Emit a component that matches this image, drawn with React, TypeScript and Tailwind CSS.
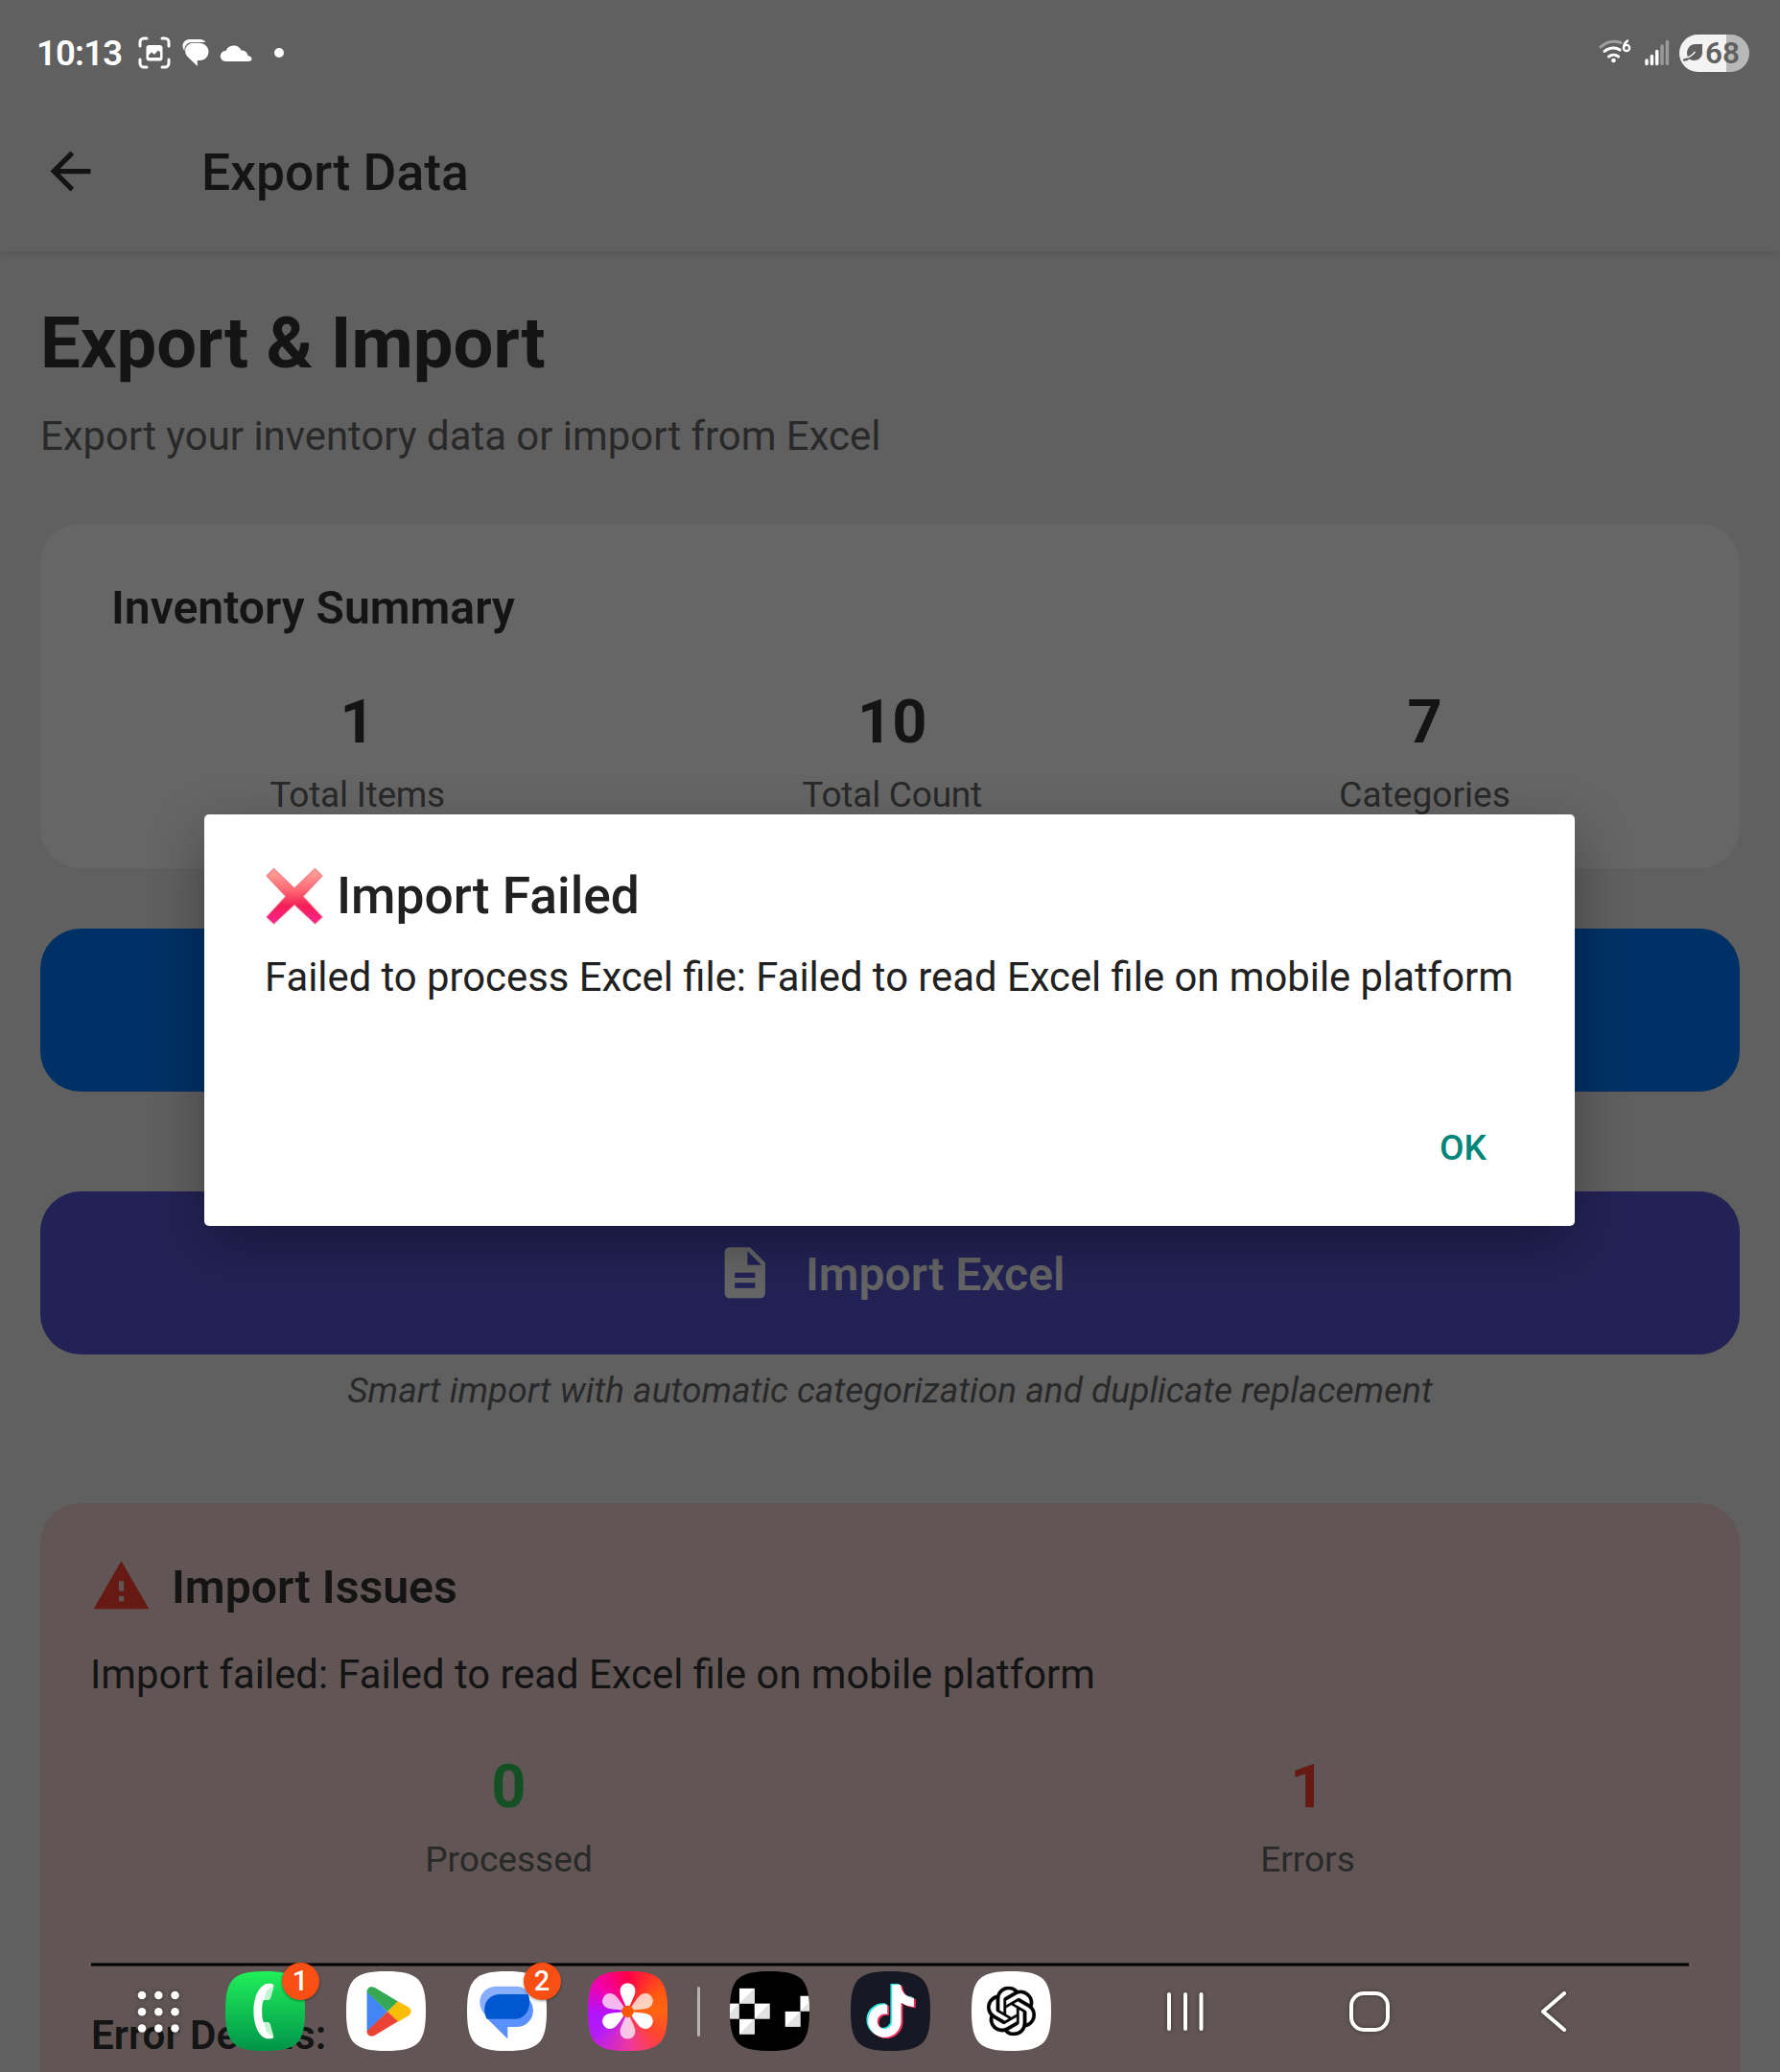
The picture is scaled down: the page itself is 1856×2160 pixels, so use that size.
import type { ReactNode } from "react";
import { MdArrowBack, MdDescription, MdWarning } from "react-icons/md";
import { SiOpenai, SiTiktok } from "react-icons/si";

function StatusBar() {
  return (
    <div className="absolute top-0 left-0 flex h-[110px] w-full items-center justify-between pr-8 pl-[38px] text-white">
      <div className="flex items-center">
        <span className="w-[105.5px] pt-[2px] text-[36.5px] leading-[40px] font-semibold tracking-[-0.8px]">10:13</span>
        <svg width="34" height="34" viewBox="0 0 34 34" fill="none">
          <path
            d="M9 2H6a4 4 0 0 0-4 4v4M25 2h3a4 4 0 0 1 4 4v4M9 32H6a4 4 0 0 1-4-4v-4M25 32h3a4 4 0 0 0 4-4v-4"
            stroke="#fff"
            strokeWidth="3"
            strokeLinecap="round"
          />
          <rect x="8.500" y="9" width="17" height="16.500" rx="3" fill="#fff" />
          <path d="M11 22v-2.500l3-3 3 2.200 4-4.200 2 2V22z" fill="#606060" />
        </svg>
        <svg className="ml-[11px]" width="30" height="30" viewBox="0 0 30 30" fill="#fff">
          <path d="M3.500 13C-1 7.500 2.500 1 9 1h10c3 0 5 1 6.500 3H12C6.500 4 3 8 3.500 13z" />
          <path d="M13 4.700h5.500c5.500 0 10 4 10 9S24.500 23 19.500 23h-2.700v6L6 18.500C1.500 12 5.500 4.700 13 4.700z" />
        </svg>
        <svg className="ml-[10px]" width="34" height="20" viewBox="0 0 34 20" fill="#fff">
          <path d="M6 19a5.500 5.500 0 0 1 .5-11A8.700 8.700 0 0 1 22.500 7.500c4 0 6.500 2.500 7 5.500 2.500.5 4 1.800 4 3.500 0 1.500-1.500 2.500-3.500 2.500z" />
        </svg>
        <div className="ml-[23px] size-[10px] rounded-full bg-white" />
      </div>
      <div className="flex items-center">
        <svg width="36" height="30" viewBox="0 0 36 30" fill="none" strokeLinecap="round">
          <path d="M2 9C8 3.500 16 2 23 4.500" stroke="#a0a0a0" strokeWidth="3" />
          <path d="M6 13.500C11 9 18 9 22 12M10.500 19c3-2.500 7-2.500 10 0" stroke="#fff" strokeWidth="3" />
          <circle cx="15.500" cy="23" r="2.300" fill="#fff" />
          <path d="M30 2.500c-2.500 2-4 4-4 7" stroke="#fff" strokeWidth="2.400" />
          <circle cx="29" cy="10" r="3.100" stroke="#fff" strokeWidth="2.400" />
        </svg>
        <svg className="ml-[12px]" width="26" height="30" viewBox="0 0 26 30" strokeWidth="3.500" strokeLinecap="round">
          <path d="M2 26.500v-3.500M7.400 26.500v-8M12.700 26.500V13.500" stroke="#fff" />
          <path d="M18 26.500V8M23.400 26.500V3.500" stroke="#999" />
        </svg>
        <div className="ml-[10px] flex h-[39px] w-[73px] items-center overflow-hidden rounded-full bg-[linear-gradient(90deg,#f3f3f3_49px,#b8b8b8_49px)] pl-[4px] text-[#606060]">
          <svg width="21" height="20" viewBox="0 0 21 20">
            <path d="M20 1v8c0 6-4 9-9 9-5 0-7-4-7-8s3-9 9-9z" fill="#606060" />
            <path d="M1 17.500C6 17 10 13 13 9.500" stroke="#606060" strokeWidth="2.500" strokeLinecap="round" />
            <path d="M4 15c4-1 6-3 8.500-6" stroke="#f3f3f3" strokeWidth="1.500" />
          </svg>
          <span className="ml-[2px] text-[31.5px] leading-[39px] font-semibold">68</span>
        </div>
      </div>
    </div>
  );
}

function Stat({ value, label, color = "text-[#141414]" }: { value: string; label: ReactNode; color?: string }) {
  return (
    <div className="flex flex-col items-center">
      <div className={"text-[63.2px] leading-[76px] font-bold " + color}>{value}</div>
      <div className="mt-[17px] text-[37.1px] leading-[44px] text-[#292929]">{label}</div>
    </div>
  );
}

const squircle = "M50 0C90 0 100 10 100 50S90 100 50 100 0 90 0 50 10 0 50 0Z";

function AppIcon({ id, fill, badge, children }: { id: string; fill: string; badge?: string; children: ReactNode }) {
  return (
    <div className="relative size-[83px] shrink-0">
      <svg width="83" height="83" viewBox="0 0 100 100">
        <clipPath id={id}>
          <path d={squircle} />
        </clipPath>
        <path d={squircle} fill={fill} />
        <g clipPath={"url(#" + id + ")"}>{children}</g>
      </svg>
      {badge && (
        <span className="absolute -top-[9px] -right-[15px] flex size-[39px] items-center justify-center rounded-full bg-[#f94e14] text-[29px] leading-[39px] font-medium text-white shadow-[0_1px_3px_rgba(0,0,0,0.4)]">
          {badge}
        </span>
      )}
    </div>
  );
}

const petal = "M50 50C47 40 40 30 40.500 24C41 18 45 15 50 15S59 18 59.500 24C60 30 53 40 50 50Z";

function Dock() {
  return (
    <div className="absolute bottom-0 left-0 flex h-[126px] w-full items-center pl-[143px]">
      <svg width="44" height="44" viewBox="0 0 44 44" fill="#fff" className="drop-shadow-[0_0_2px_rgba(0,0,0,0.5)]">
        {[5, 22.3, 39.5].map((y) => [5, 22.3, 39.5].map((x) => <circle key={x + "-" + y} cx={x} cy={y} r="4.300" />))}
      </svg>
      <div className="-mt-px ml-[47.5px] flex gap-[43px]">
        <AppIcon id="phone" fill="url(#green)" badge="1">
          <defs>
            <linearGradient id="green" x1="0" y1="0" x2="0" y2="1">
              <stop offset="0" stopColor="#20f05a" />
              <stop offset="1" stopColor="#00944a" />
            </linearGradient>
          </defs>
          <path d="M50 16h8c2 0 3 1 3 3l-4 14c-.6 2-1.500 3-3.500 3H46z M46 64h7c2 0 3 1 3.500 3l4 14c.4 2-.5 3-2 3.500L50 82z" fill="#c4f3d3" />
          <path d="M57 15.500C44 14 35.500 30 35.500 50S44 87 57 84.500c1.500-.3 2.500-1 3-2L51.500 76 48.500 64C46.500 62 46 57 46 50s.5-12 2.500-14L52 24l8.500-6c-.5-1.500-1.500-2.300-3.500-2.500z" fill="#fff" />
        </AppIcon>
        <AppIcon id="play" fill="#fff">
          <path d="M26 25v51l26-25.500z" fill="#4285f4" />
          <path d="M26 26c0-6 5-8 10-5.500L65 38 52 50.500z" fill="#34a853" />
          <path d="M65 37.500l13 7.500c4.500 3 4.500 8 0 11l-13 7.500L52 50.500z" fill="#fbbc04" />
          <path d="M26 75c0 6 5 8 10 5.500L65 63 52 50.500z" fill="#ea4335" />
        </AppIcon>
        <AppIcon id="messages" fill="#fff" badge="2">
          <path d="M36 19h26c10 0 16 7 16 15H50L23 55c-4-4-7-10-7-16 0-11 9-20 20-20z" fill="#8aaeff" />
          <path d="M42 29h21c12 0 20 9 20 20.500S74 70 62 70H51v15L27 61c-3-4-5-8-5-14 0-10 8-18 20-18z" fill="#5b90ff" />
          <path d="M42 29h34c2 3 2.500 6 2.500 9C78.500 51 71 60 60 60H25c-2-3-3-7-3-12 0-11 8-19 20-19z" fill="#0057d0" />
        </AppIcon>
        <AppIcon id="gallery" fill="#ff2a5a">
          <foreignObject width="100" height="100">
            <div className="size-[100px] bg-[conic-gradient(from_0deg,#ff0048,#ff5a10_60deg,#ff6510_90deg,#ff4530_130deg,#f0389a_175deg,#b31cf8_235deg,#b013ff_265deg,#f000b0_310deg,#ff0048)]" />
          </foreignObject>
          {[60, 180, 300].map((a) => (
            <path key={a} d={petal} fill="#fff" fillOpacity="0.720" transform={"rotate(" + a + " 50 50)"} />
          ))}
          {[0, 120, 240].map((a) => (
            <path key={a} d={petal} fill="#fff" transform={"rotate(" + a + " 50 50)"} />
          ))}
          <circle cx="50" cy="50.500" r="7.500" fill="#ff5500" />
        </AppIcon>
      </div>
      <div className="ml-[31px] h-[52px] w-[3px] rounded-full bg-[#b7b1b1]" />
      <div className="-mt-px ml-[31.5px] flex gap-[43px]">
        <AppIcon id="pixels" fill="#000">
          {[
            [12, 21.5],
            [-7.5, 40.5],
            [31, 40.5],
            [12, 60],
            [69.5, 50.5],
            [88.5, 31],
          ].map(([x, y]) => (
            <g key={x + "-" + y} transform={"translate(" + x + " " + y + ")"}>
              <rect width="19" height="19" fill="#fff" />
              <path d="M19 0v19H0z" fill="#e2e2e2" />
            </g>
          ))}
        </AppIcon>
        <AppIcon id="tiktok" fill="#161823">
          <SiTiktok x="15.500" y="15.500" size="66" color="#30e8e0" />
          <SiTiktok x="20" y="18.500" size="66" color="#f0305c" />
          <SiTiktok x="17.700" y="17" size="66" color="#fff" />
        </AppIcon>
        <AppIcon id="openai" fill="#fff">
          <SiOpenai x="19" y="19" size="62" color="#000" stroke="#000" strokeWidth="0.200" />
        </AppIcon>
      </div>
      <svg className="ml-[118px] drop-shadow-[0_0_2px_rgba(0,0,0,0.4)]" width="44" height="44" viewBox="0 0 44 44" stroke="#fff" strokeWidth="4" strokeLinecap="round">
        <path d="M5 4v36M22 4v36M38.500 4v36" />
      </svg>
      <svg className="ml-[148px] drop-shadow-[0_0_2px_rgba(0,0,0,0.4)]" width="44" height="44" viewBox="0 0 44 44" fill="none" stroke="#fff" strokeWidth="4">
        <rect x="3" y="3" width="38" height="38" rx="13" />
      </svg>
      <svg className="ml-[155px] drop-shadow-[0_0_2px_rgba(0,0,0,0.4)]" width="30" height="44" viewBox="0 0 30 44" fill="none" stroke="#fff" strokeWidth="4" strokeLinecap="round" strokeLinejoin="round">
        <path d="M26 3L4 22l22 19" />
      </svg>
    </div>
  );
}

function AlertDialog() {
  return (
    <div className="absolute top-[849px] left-[213px] flex h-[429px] w-[1429px] flex-col rounded-[5px] bg-white pt-[53px] pl-[63px] text-[#212121] shadow-[0_20px_60px_rgba(0,0,0,0.32)]">
      <div className="flex h-[64px] items-center">
        <svg className="ml-px" width="60" height="60" viewBox="0 0 60 60">
          <defs>
            <linearGradient id="cross" x1="0" y1="0" x2="0" y2="1">
              <stop offset="0" stopColor="#ffa99c" />
              <stop offset="0.400" stopColor="#ff6671" />
              <stop offset="0.680" stopColor="#f41d55" />
              <stop offset="1" stopColor="#fb2296" />
            </linearGradient>
          </defs>
          <path
            d="M8.500 1.500L30 22 51.500 1.500 59 9 39 30.500 59 52 51.500 59 30 39 8.500 59 1 52 21 30.500 1 9z"
            fill="url(#cross)"
            stroke="#e8566c"
            strokeOpacity="0.500"
            strokeWidth="1.500"
            strokeLinejoin="round"
          />
        </svg>
        <h2 className="ml-[14px] text-[53.3px] leading-[64px] font-medium">Import Failed</h2>
      </div>
      <p className="mt-[25px] text-[41.8px] leading-[56px]">
        Failed to process Excel file: Failed to read Excel file on mobile platform
      </p>
      <button className="mt-[128px] mr-[92px] self-end text-[37.1px] leading-[44px] font-medium text-[#008577]">OK</button>
    </div>
  );
}

export default function App() {
  return (
    <div className="relative h-[2160px] w-[1856px] overflow-hidden bg-[#606060] font-[Roboto,sans-serif] text-[#141414]">
      <header className="flex h-[262px] items-center pt-[98px] pl-[42px] shadow-[0_2px_8px_rgba(0,0,0,0.12)]">
        <MdArrowBack className="-mt-[3px] size-[63px]" />
        <h1 className="ml-[105px] text-[53.4px] leading-[64px] font-medium">Export Data</h1>
      </header>
      <main className="px-[42px] pt-[52px]">
        <h2 className="text-[74.2px] leading-[88px] font-bold">Export &amp; Import</h2>
        <p className="mt-[25px] text-[41.9px] leading-[56px] text-[#292929]">
          Export your inventory data or import from Excel
        </p>
        <section className="mt-[63px] h-[359px] rounded-[42px] bg-[#666666] px-[53px] pt-[60px]">
          <h3 className="ml-[21px] text-[48.1px] leading-[56px] font-semibold">Inventory Summary</h3>
          <div className="mt-[52px] flex justify-around">
            <Stat value="1" label={<span className="tracking-[-0.25px]">Total Items</span>} />
            <Stat value="10" label={<span className="tracking-[-0.25px]">Total Count</span>} />
            <Stat value="7" label="Categories" />
          </div>
        </section>
        <div className="mt-[63px] h-[170px] rounded-[42px] bg-[#003166]" />
        <button className="mt-[104px] flex h-[170px] w-full items-center justify-center rounded-[42px] bg-[#232256] pr-px text-[#666666]">
          <MdDescription className="size-[63.5px]" />
          <span className="ml-[32px] pt-[3px] text-[48px] leading-[56px] font-semibold">Import Excel</span>
        </button>
        <p className="mt-[16px] text-center text-[37.1px] leading-[44px] text-[#292929] italic">
          Smart import with automatic categorization and duplicate replacement
        </p>
        <section className="mt-[95px] h-[640px] rounded-[42px] bg-[#615655] px-[53px] pt-[54px]">
          <div className="flex h-[64px] items-center">
            <MdWarning className="size-[63px] text-[#661a13]" />
            <h3 className="ml-[21px] pt-[3px] text-[48.2px] leading-[56px] font-semibold">Import Issues</h3>
          </div>
          <p className="mt-[33px] -ml-px text-[41.8px] leading-[56px]">
            Import failed: Failed to read Excel file on mobile platform
          </p>
          <div className="mt-[50px] flex justify-around">
            <Stat value="0" label="Processed" color="text-[#155024]" />
            <Stat value="1" label="Errors" color="text-[#661a13]" />
          </div>
          <div className="mt-[85px] h-[4px] border-y border-[#302b2b] bg-black" />
          <h4 className="mt-[44px] text-[42.2px] leading-[56px] font-semibold">Error Details:</h4>
        </section>
      </main>
      <AlertDialog />
      <StatusBar />
      <Dock />
    </div>
  );
}
